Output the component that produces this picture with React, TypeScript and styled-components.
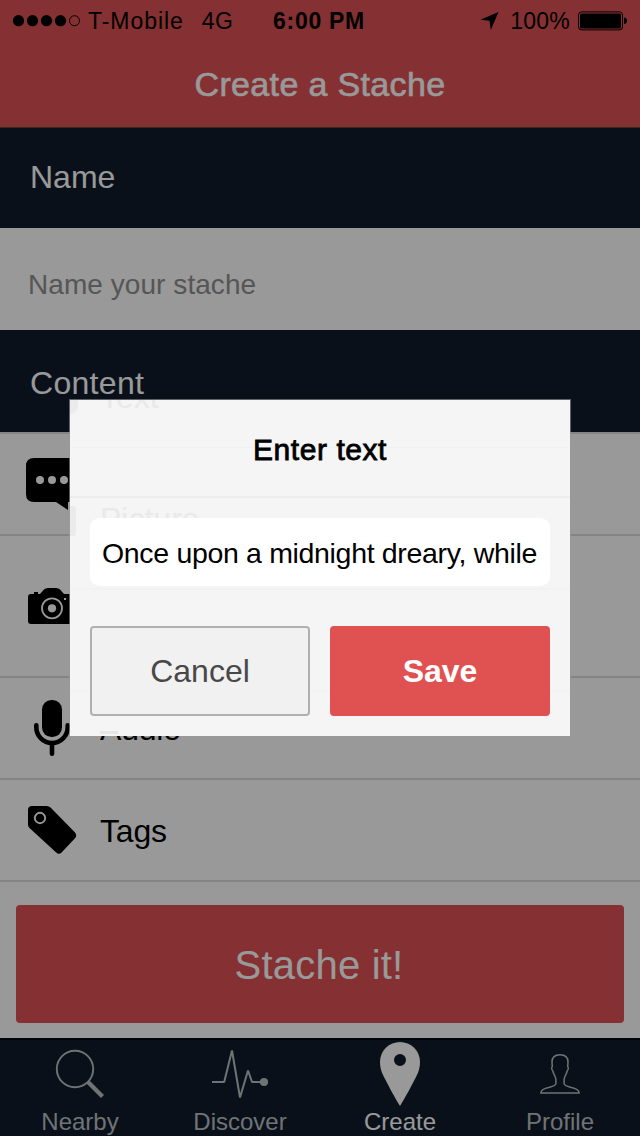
import React from 'react';
import styled, { createGlobalStyle } from 'styled-components';

const GlobalStyle = createGlobalStyle`
  * { box-sizing: border-box; }
  body {
    margin: 0;
    background: #fff;
    font-family: "Liberation Sans", Arial, sans-serif;
  }
`;

const Screen = styled.div`
  position: relative;
  width: 640px;
  height: 1136px;
  overflow: hidden;
  display: flex;
  flex-direction: column;
  background: #fff;
`;

const Header = styled.header`
  height: 128px;
  background: #de5154;
  border-bottom: 1px solid #5a4632;
`;

const StatusBar = styled.div`
  display: flex;
  align-items: center;
  height: 42px;
  padding: 0 12px 0 13px;
  color: #000;
`;

const StatusText = styled.span<{ $left: number; $track?: number; $bold?: boolean }>`
  font-size: 23px;
  line-height: 42px;
  white-space: nowrap;
  margin-left: ${(p) => p.$left}px;
  letter-spacing: ${(p) => p.$track ?? 0}px;
  font-weight: ${(p) => (p.$bold ? 700 : 400)};
`;

const StatusRight = styled.div`
  display: flex;
  align-items: center;
  margin-left: auto;
`;

const Title = styled.h1`
  margin: 0;
  line-height: 84px;
  text-align: center;
  font-size: 34px;
  font-weight: 400;
  letter-spacing: 0.35px;
  color: #fff;
  -webkit-text-stroke: 0.6px #fff;
`;

const SectionBar = styled.div<{ $height: number; $drop: number; $track?: number }>`
  height: ${(p) => p.$height}px;
  padding: ${(p) => p.$drop}px 0 0 30px;
  background: #111c2b;
  color: #fff;
  font-size: 32px;
  line-height: 40px;
  letter-spacing: ${(p) => p.$track ?? 0}px;
`;

const NameField = styled.div`
  height: 102px;
  padding: 37px 0 0 28px;
  font-size: 28px;
  line-height: 40px;
  letter-spacing: 0.06px;
  color: #8f8f8f;
`;

const List = styled.div`
  border-top: 2px solid #dcdcdc;
`;

const Row = styled.div<{ $height: number }>`
  display: flex;
  align-items: center;
  gap: 22px;
  height: ${(p) => p.$height}px;
  padding-left: 26px;
  border-bottom: 2px solid #dcdcdc;
  color: #000;
  svg { flex: none; }
`;

const RowLabel = styled.span`
  padding-top: 2px;
  font-size: 32px;
  letter-spacing: -0.2px;
`;

const SubmitArea = styled.div`
  height: 156px;
  padding: 23px 16px 15px;
`;

const SubmitButton = styled.div`
  height: 118px;
  border-radius: 4px;
  background: #de5154;
  color: #fff;
  font-size: 40px;
  line-height: 121px;
  letter-spacing: 0.2px;
  padding-right: 2px;
  text-align: center;
`;

const TabBar = styled.nav`
  display: flex;
  height: 98px;
  border-top: 2px solid #02070d;
  background: #111c2b;
`;

const Tab = styled.div<{ $active?: boolean }>`
  flex: 1;
  display: flex;
  flex-direction: column;
  align-items: center;
  color: ${(p) => (p.$active ? '#fff' : '#bbc0c3')};
  svg { flex: none; }
`;

const TabLabel = styled.span`
  font-size: 24px;
  line-height: 32px;
`;

const Backdrop = styled.div`
  position: absolute;
  inset: 0;
  background: rgba(0, 0, 0, 0.4);
`;

const Dialog = styled.div`
  position: absolute;
  left: 70px;
  top: 400px;
  width: 500px;
  height: 336px;
  overflow: hidden;
  background: #f5f5f5;
`;

const DialogEdge = styled.div`
  position: absolute;
  left: 69px;
  top: 399px;
  width: 502px;
  height: 337px;
  background: rgba(153, 153, 153, 0.6);
`;

const Ghost = styled.span<{ $x: number; $y: number }>`
  position: absolute;
  left: ${(p) => p.$x}px;
  top: ${(p) => p.$y}px;
  font-size: 32px;
  line-height: 40px;
  color: #e9e9e9;
`;

const GhostShape = styled.span<{ $x: number; $y: number; $w: number; $h: number; $r?: string; $c?: string }>`
  position: absolute;
  left: ${(p) => p.$x}px;
  top: ${(p) => p.$y}px;
  width: ${(p) => p.$w}px;
  height: ${(p) => p.$h}px;
  border-radius: ${(p) => p.$r ?? '0'};
  background: ${(p) => p.$c ?? '#ebebeb'};
`;

const DialogBody = styled.div`
  position: relative;
  display: flex;
  flex-direction: column;
`;

const DialogTitle = styled.h2`
  margin: 0;
  height: 98px;
  border-bottom: 2px solid #ededed;
  text-align: center;
  font-size: 30px;
  font-weight: 400;
  line-height: 99px;
  letter-spacing: 0.55px;
  -webkit-text-stroke: 0.8px #000;
`;

const TextInput = styled.div`
  height: 68px;
  margin: 20px 20px 0;
  padding-left: 12px;
  border-radius: 10px;
  background: #fff;
  font-size: 28.5px;
  line-height: 70px;
  letter-spacing: -0.33px;
  white-space: nowrap;
  overflow: hidden;
`;

const Actions = styled.div`
  display: grid;
  grid-template-columns: 1fr 1fr;
  gap: 20px;
  padding: 40px 20px 0;
`;

const ActionButton = styled.div<{ $primary?: boolean }>`
  height: 90px;
  border-radius: 4px;
  border: 2px solid ${(p) => (p.$primary ? '#e05151' : '#b0b0b0')};
  background: ${(p) => (p.$primary ? '#e05151' : '#f1f1f1')};
  color: ${(p) => (p.$primary ? '#fff' : '#484848')};
  font-weight: ${(p) => (p.$primary ? 700 : 400)};
  font-size: 32px;
  line-height: 86px;
  text-align: center;
`;

const SignalDots = () => (
  <svg width="68" height="14" viewBox="0 0 68 14">
    {[5.5, 19.5, 33.5, 47.5].map((x) => (
      <circle key={x} cx={x} cy="6.7" r="5.6" />
    ))}
    <circle cx="61.5" cy="6.7" r="5" fill="none" stroke="#000" strokeWidth="1" />
  </svg>
);

const LocationArrow = () => (
  <svg width="19" height="20" viewBox="0 0 19 20">
    <path d="M18.5 1 L0.5 8.8 L9.5 9.8 L10.8 19 Z" />
  </svg>
);

const BatteryIcon = styled.svg`
  margin-left: 8px;
`;

const Battery = () => (
  <BatteryIcon width="50" height="20" viewBox="0 0 50 20">
    <rect x="0.5" y="0.9" width="44" height="18" rx="3" fill="none" stroke="#000" />
    <rect x="2" y="2.4" width="41" height="15" rx="1.5" />
    <path d="M46 6.500 q3 0.5 3 3.3 t-3 3.3 z" />
  </BatteryIcon>
);

const BubbleIcon = () => (
  <svg width="52" height="54" viewBox="26 457 52 54">
    <path d="M34 458 H70 Q78 458 78 466 V494 Q78 502 70 502 H68 V510 L56 502 H34 Q26 502 26 494 V466 Q26 458 34 458 Z" />
    {[40, 52, 64].map((x) => (
      <circle key={x} cx={x} cy="480" r="4" fill="#fff" />
    ))}
  </svg>
);

const CameraIcon = () => (
  <svg width="52" height="40" viewBox="26 586 52 40">
    <path d="M31 594 H34 V592 H38 V594 H40 L44 589.5 Q45.5 588 48 588 H56 Q58.500 588 60 589.500 L64 594 H73 Q76 594 76 597 V621 Q76 624 73 624 H31 Q28 624 28 621 V597 Q28 594 31 594 Z" />
    <circle cx="52" cy="608.3" r="10" fill="none" stroke="#fff" strokeWidth="1.800" />
    <circle cx="52" cy="608.3" r="4.100" fill="#fff" />
    <rect x="64" y="598" width="2" height="2" fill="#fff" />
  </svg>
);

const MicIcon = () => (
  <svg width="52" height="58" viewBox="26 699 52 58">
    <rect x="42" y="700" width="20" height="37" rx="9.500" />
    <path d="M36.300 725.300 V727.300 A15.700 15.700 0 0 0 67.700 727.300 V725.300" fill="none" stroke="#000" strokeWidth="4.600" strokeLinecap="round" />
    <path d="M52 743 V753.700" stroke="#000" strokeWidth="4.600" strokeLinecap="round" />
  </svg>
);

const TagIcon = () => (
  <svg width="52" height="52" viewBox="26 804 52 52">
    <path d="M32 806 H46.500 Q49 806 50.800 807.800 L75 832.500 Q77.400 835.500 75 838.300 L61.800 852.300 Q59 855.300 56.200 852.500 L29.500 828 Q28 826.500 28 824.500 V810 Q28 806 32 806 Z" />
    <circle cx="40" cy="818" r="5.200" fill="none" stroke="#fff" strokeWidth="1.900" />
  </svg>
);

const SearchTabIcon = () => (
  <svg width="80" height="66" viewBox="40 1040 80 66" fill="none" stroke="currentColor">
    <circle cx="75" cy="1069" r="18.200" strokeWidth="1.900" />
    <path d="M88 1082 L102.500 1096.500" strokeWidth="4.300" />
  </svg>
);

const PulseTabIcon = () => (
  <svg width="80" height="66" viewBox="200 1040 80 66" fill="none" stroke="currentColor">
    <path d="M212 1082 H224.200 L232 1050.500 L240 1097.500 L248 1070.500 L252 1082 H264" strokeWidth="2" strokeLinejoin="bevel" />
    <circle cx="264" cy="1082" r="4.100" fill="currentColor" stroke="none" />
  </svg>
);

const PinTabIcon = () => (
  <svg width="80" height="66" viewBox="360 1040 80 66">
    <path fill="currentColor" fillRule="evenodd" d="M400 1106 C395 1098 388 1085 383.500 1076 C381 1071 380 1067 380 1062 A20 20 0 0 1 420 1062 C420 1067 419 1071 416.500 1076 C412 1085 405 1098 400 1106 Z M400 1054 A6 6 0 1 0 400 1066 A6 6 0 1 0 400 1054 Z" />
  </svg>
);

const ProfileTabIcon = () => (
  <svg width="80" height="66" viewBox="520 1040 80 66" fill="none" stroke="currentColor" strokeWidth="1.500">
    <path d="M560 1054.700 C554.500 1054.700 552 1057.500 552 1062 L552.300 1066.500 C551.300 1067.500 551.700 1070 552.800 1070.800 C553.300 1074 555.900 1077 555.900 1079.500 V1083.500 C555.500 1087.500 547 1086.500 543 1089.500 Q541 1091 540.900 1093 H579.100 Q579 1091 577 1089.500 C573 1086.500 564.500 1087.500 564.100 1083.500 V1079.500 C564.100 1077 566.700 1074 567.200 1070.800 C568.300 1070 568.700 1067.500 567.700 1066.500 L568 1062 C568 1057.500 565.500 1054.700 560 1054.700 Z" />
  </svg>
);

export default function App() {
  return (
    <>
      <GlobalStyle />
      <Screen>
        <Header>
          <StatusBar>
            <SignalDots />
            <StatusText $left={7} $track={0.95}>T-Mobile</StatusText>
            <StatusText $left={18} $track={0.3}>4G</StatusText>
            <StatusText $left={40} $track={0.7} $bold>6:00 PM</StatusText>
            <StatusRight>
              <LocationArrow />
              <StatusText $left={11} $track={0.2}>100%</StatusText>
              <Battery />
            </StatusRight>
          </StatusBar>
          <Title>Create a Stache</Title>
        </Header>
        <SectionBar $height={100} $drop={29}>Name</SectionBar>
        <NameField>Name your stache</NameField>
        <SectionBar $height={102} $drop={33} $track={0.3}>Content</SectionBar>
        <List>
          <Row $height={102}><BubbleIcon /></Row>
          <Row $height={142}><CameraIcon /></Row>
          <Row $height={102}><MicIcon /><RowLabel>Audio</RowLabel></Row>
          <Row $height={102}><TagIcon /><RowLabel>Tags</RowLabel></Row>
        </List>
        <SubmitArea>
          <SubmitButton>Stache it!</SubmitButton>
        </SubmitArea>
        <TabBar>
          <Tab><SearchTabIcon /><TabLabel>Nearby</TabLabel></Tab>
          <Tab><PulseTabIcon /><TabLabel>Discover</TabLabel></Tab>
          <Tab $active><PinTabIcon /><TabLabel>Create</TabLabel></Tab>
          <Tab><ProfileTabIcon /><TabLabel>Profile</TabLabel></Tab>
        </TabBar>
        <Backdrop />
        <DialogEdge />
        <Dialog>
          <Ghost $x={30} $y={-23}>Text</Ghost>
          <Ghost $x={30} $y={99}>Picture</Ghost>
          <GhostShape $x={0} $y={0} $w={8} $h={14} $r="0 0 8px 0" />
          <GhostShape $x={0} $y={106} $w={6} $h={30} $r="0 3px 3px 0" />
          <GhostShape $x={0} $y={47} $w={500} $h={1} $c="#f1f1f1" />
          <GhostShape $x={0} $y={188} $w={500} $h={2} $c="#f2f2f2" />
          <GhostShape $x={0} $y={290} $w={500} $h={2} $c="#f2f2f2" />
          <GhostShape $x={30} $y={331} $w={18} $h={3} $c="#e6e6e6" />
          <DialogBody>
            <DialogTitle>Enter text</DialogTitle>
            <TextInput>Once upon a midnight dreary, while</TextInput>
            <Actions>
              <ActionButton>Cancel</ActionButton>
              <ActionButton $primary>Save</ActionButton>
            </Actions>
          </DialogBody>
        </Dialog>
      </Screen>
    </>
  );
}
